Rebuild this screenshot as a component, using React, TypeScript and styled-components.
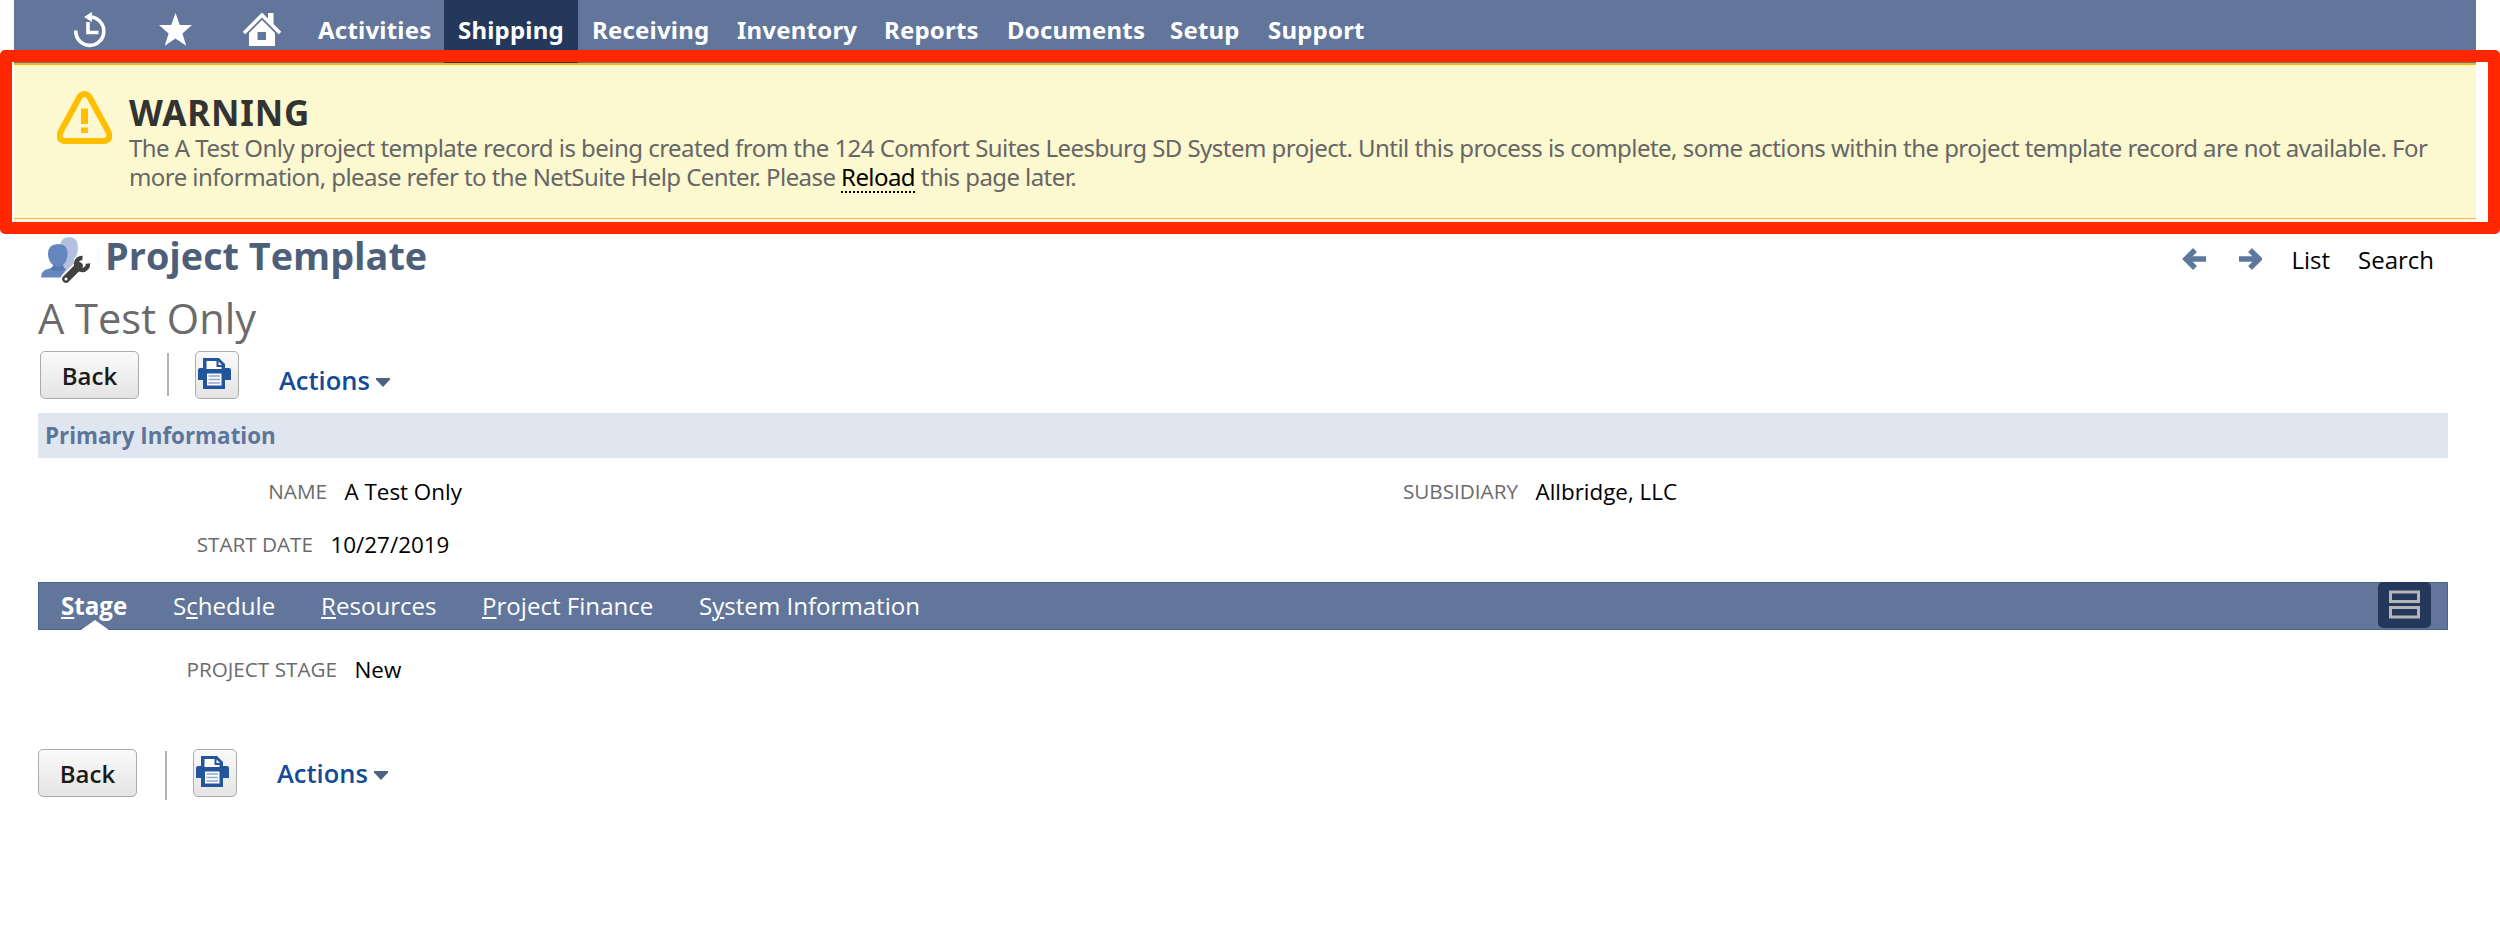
import React from "react";
import styled, { createGlobalStyle } from "styled-components";

const Global = createGlobalStyle`
  * { box-sizing: border-box; }
  html, body { margin: 0; background: #fff; overflow: hidden; }
  body { font-family: "Open Sans", "Noto Sans", sans-serif; color: #000; }
`;

const Page = styled.div`
  position: relative;
  width: 2500px;
  height: 947px;
  overflow: hidden;
`;
const NavBar = styled.nav`
  display: flex;
  height: 63px;
  margin: 0 24px 0 14px;
  padding-left: 58px;
  background: #61769a;
  font-family: "Noto Sans", sans-serif;
`;
const NavIcons = styled.div`
  display: flex;
  width: 232px;
  svg { display: block; width: 232px; height: 63px; }
`;
const NavItem = styled.a<{ $w: number; $active?: boolean }>`
  width: ${(p) => p.$w}px;
  padding-left: 14px;
  font-size: 24px;
  font-weight: 700;
  line-height: 60px;
  letter-spacing: 0.2px;
  white-space: nowrap;
  color: #fff;
  background: ${(p) => (p.$active ? "#24385b" : "transparent")};
`;
const Banner = styled.section`
  display: flex;
  height: 156px;
  margin: 0 24px 0 14px;
  padding: 0 0 0 43px;
  background: #fcf8cf;
  border-top: 2px solid #ffb600;
  border-bottom: 1px solid #fbb829;
  box-shadow: 0 3px 0 #f3f3f3;
  font-family: "Noto Sans", sans-serif;
`;
const WarningIcon = styled.svg`
  flex: none;
  width: 55px;
  height: 53px;
  margin: 26px 17px 0 0;
`;
const BannerText = styled.div`
  padding-top: 28px;
`;
const BannerTitle = styled.h2`
  margin: 0;
  font-size: 35px;
  line-height: 40px;
  letter-spacing: 0.8px;
  color: #333;
`;
const BannerLine = styled.div<{ $ls: number }>`
  height: 29px;
  font-size: 24px;
  line-height: 29px;
  letter-spacing: ${(p) => p.$ls}px;
  white-space: nowrap;
  color: #666;
`;
const Reload = styled.a`
  display: inline-block;
  height: 31px;
  border-bottom: 2px dotted #000;
  color: #000;
`;
const Highlight = styled.div`
  position: absolute;
  left: 0;
  top: 50px;
  width: 2500px;
  height: 184px;
  border: 12px solid #ff2600;
  border-radius: 5px;
`;
const Content = styled.main`
  display: flex;
  flex-direction: column;
  margin: 15px 52px 0 38px;
`;
const TitleRow = styled.header`
  display: flex;
  height: 58px;
`;
const ProjectIcon = styled.svg`
  width: 54px;
  height: 52px;
  margin-right: 13px;
`;
const Title = styled.h1`
  flex: 1;
  margin: 0;
  font-size: 37.8px;
  line-height: 43px;
  color: #4d5f79;
  white-space: nowrap;
`;
const PageLinks = styled.div`
  display: flex;
  height: 52px;
  padding-right: 14px;
  font-size: 24px;
  line-height: 51px;
  svg { width: 26px; height: 24px; margin: 13px 30px 0 0; }
  svg + a { margin-left: -1px; }
  a + a { margin-left: 28px; }
`;
const RecordName = styled.div`
  height: 59px;
  font-size: 41.6px;
  line-height: 52px;
  color: #6b6b6b;
`;
const ButtonRow = styled.div<{ $offset?: number }>`
  display: flex;
  height: 62px;
  padding-left: ${(p) => p.$offset ?? 0}px;
`;
const Button = styled.button<{ $w: number }>`
  display: flex;
  justify-content: center;
  width: ${(p) => p.$w}px;
  height: 48px;
  padding: 0;
  border: 1.5px solid #ababab;
  border-radius: 5px;
  background: linear-gradient(#fafafa, #e4e4e4);
  font-family: "Open Sans", sans-serif;
  font-size: 24px;
  font-weight: 600;
  line-height: 48px;
  color: #1a1a1a;
  svg { width: 33px; height: 31px; margin-top: 6px; margin-right: 5px; }
`;
const Divider = styled.i<{ $h: number }>`
  width: 2px;
  height: ${(p) => p.$h}px;
  margin: 2px 26px 0 28px;
  background: #b3b3b3;
`;
const Actions = styled.div<{ $drop?: number }>`
  display: flex;
  align-items: center;
  gap: 6px;
  height: 48px;
  margin-left: 40px;
  margin-top: ${(p) => p.$drop ?? 0}px;
  font-size: 25.5px;
  font-weight: 600;
  color: #144b97;
  svg { width: 14px; height: 9px; margin-top: 5px; }
`;
const SectionBar = styled.h3`
  height: 45px;
  margin: 0;
  padding-left: 7px;
  background: #dfe6ef;
  font-size: 22.4px;
  line-height: 45px;
  color: #5d7599;
`;
const Fields = styled.div`
  display: grid;
  grid-template-columns: 1201px 1fr;
  grid-auto-rows: 53px;
  height: 124px;
  padding-top: 7px;
`;
const Field = styled.div<{ $label: number }>`
  display: grid;
  grid-template-columns: ${(p) => p.$label}px auto;
  column-gap: 17.5px;
  justify-content: start;
  line-height: 53px;
  white-space: nowrap;
`;
const Label = styled.span`
  text-align: right;
  font-size: 20.7px;
  color: #6b6b6b;
`;
const Value = styled.span`
  font-size: 22.4px;
`;
const TabBar = styled.nav`
  display: flex;
  height: 48px;
  padding-left: 22px;
  background: #61769a;
  border: 1px solid #47658c;
`;
const Tab = styled.a<{ $w: number; $active?: boolean }>`
  position: relative;
  width: ${(p) => p.$w}px;
  font-size: 24.1px;
  font-weight: ${(p) => (p.$active ? 700 : 400)};
  line-height: 45px;
  color: #fff;
  white-space: nowrap;
  u { text-underline-offset: 2px; text-decoration-thickness: 2px; }
`;
const Pointer = styled.svg`
  position: absolute;
  left: 20px;
  bottom: -1px;
  width: 28px;
  height: 10px;
`;
const ViewToggle = styled.button`
  width: 53px;
  height: 46px;
  margin: -1px 16px 0 auto;
  padding: 8px 11px;
  border: 0;
  border-radius: 5px;
  background: #24385b;
  svg { display: block; width: 31px; height: 30px; }
`;
const StagePanel = styled.div`
  height: 119px;
  padding-top: 13px;
`;

const Printer = () => (
  <svg viewBox="0 0 33 31">
    <path d="M5 0h16l6 6v4h4q2 0 2 2v10h-6v9H5v-9H0V12q0-2 2-2h3z" fill="#22559c" />
    <path d="M8.500 3h10v6h5v2h-15z" fill="#fff" />
    <path d="M20.500 3.500v3.500h3.500z" fill="#fff" />
    <path d="M9 15.500h14.500v12H9z" fill="#fff" />
    <path d="M10.500 18h11.500M10.500 21.500h11.500M10.500 25h11.500" stroke="#8ba6cf" strokeWidth="1.300" />
  </svg>
);

const ActionsMenu = ({ drop }: { drop?: number }) => (
  <Actions $drop={drop}>
    Actions
    <svg viewBox="0 0 14 9"><path d="M0 0h14v1.500L7 9 0 1.500z" fill="#4d6180" /></svg>
  </Actions>
);

const navItems: [string, number, boolean?][] = [
  ["Activities", 140], ["Shipping", 134, true], ["Receiving", 145], ["Inventory", 147],
  ["Reports", 123], ["Documents", 163], ["Setup", 98], ["Support", 120],
];

export default function App() {
  return (
    <Page>
      <Global />
      <NavBar>
        <NavIcons>
          <svg viewBox="0 0 232 63" fill="none" stroke="#fff">
            <path d="M3.800 30.500A14 14.200 0 1 0 18 17" strokeWidth="3.600" />
            <path d="M12 17l8-5v10z" fill="#fff" stroke="none" />
            <path d="M16 22v10.500h10.500" strokeWidth="3.600" />
            <path d="M103.500 13l4.300 12H120l-9.600 8.500 3.800 12.200-10.700-7.200-10.700 7.200 3.800-12.200L87 25h12.200z" fill="#fff" stroke="none" />
            <path d="M172 33l18-18 18 18" strokeWidth="3.500" />
            <path d="M196 13h5.500v13l-5.500-5z" fill="#fff" stroke="none" />
            <path d="M177 33l13-13 13 13v13h-26zM185.500 32v8h8.500v-8z" fill="#fff" fillRule="evenodd" stroke="none" />
          </svg>
        </NavIcons>
        {navItems.map(([label, w, active]) => (
          <NavItem key={label} $w={w} $active={active}>{label}</NavItem>
        ))}
      </NavBar>
      <Banner>
        <WarningIcon viewBox="0 0 55 53" fill="none" stroke="#ffbf00">
          <path d="M22.500 6q5-6 10 0l19 35q3 8.500-5 9h-38q-8-.5-5-9z" strokeWidth="6" />
          <path d="M27.500 17.500v15.500M27.500 36.500v5.500" strokeWidth="7" />
        </WarningIcon>
        <BannerText>
          <BannerTitle>WARNING</BannerTitle>
          <BannerLine $ls={-0.535}>
            The A Test Only project template record is being created from the 124 Comfort Suites Leesburg SD System project. Until this process is complete, some actions within the project template record are not available. For
          </BannerLine>
          <BannerLine $ls={-0.575}>
            more information, please refer to the NetSuite Help Center. Please <Reload>Reload</Reload> this page later.
          </BannerLine>
        </BannerText>
      </Banner>
      <Content>
        <TitleRow>
          <ProjectIcon viewBox="0 0 54 52">
            <path d="M31 3q9 0 9 11 0 7-4 11v6l-8 8h-6V14q0-11 9-11z" fill="#b3c1df" />
            <path d="M3 43.500q0-7 7-8.500 5-1 5-4-5-4-5-11 0-10 10-10t9.500 10q0 7-4.500 11 0 3 3 4l-5 8.500z" fill="#6487c0" />
            <path d="M15 31q5 4 10 0 0 3 3 4-8 4-17 0 4-1 4-4z" fill="#5578ae" />
            <path d="M28 45l13-13" stroke="#fff" strokeWidth="11" strokeLinecap="round" />
            <path d="M28 45l13-13" stroke="#414141" strokeWidth="7.500" strokeLinecap="round" />
            <path d="M44.500 24A6 6 0 1 0 50 29.500" fill="none" stroke="#414141" strokeWidth="4.500" />
            <circle cx="28" cy="45" r="1.500" fill="#fff" />
          </ProjectIcon>
          <Title>Project Template</Title>
          <PageLinks>
            <svg viewBox="0 0 26 24" fill="none" stroke="#5d789d" strokeWidth="5.500"><path d="M15 3L6 12l9 9M6 12h20" /></svg>
            <svg viewBox="0 0 26 24" fill="none" stroke="#5d789d" strokeWidth="5.500"><path d="M14 3l9 9-9 9M23 12H3" /></svg>
            <a>List</a>
            <a>Search</a>
          </PageLinks>
        </TitleRow>
        <RecordName>A Test Only</RecordName>
        <ButtonRow $offset={2}>
          <Button $w={99}>Back</Button>
          <Divider $h={43} />
          <Button $w={44}><Printer /></Button>
          <ActionsMenu drop={5} />
        </ButtonRow>
        <SectionBar>Primary Information</SectionBar>
        <Fields>
          <Field $label={289}><Label>NAME</Label><Value>A Test Only</Value></Field>
          <Field $label={279}><Label>SUBSIDIARY</Label><Value>Allbridge, LLC</Value></Field>
          <Field $label={275}><Label>START DATE</Label><Value>10/27/2019</Value></Field>
        </Fields>
        <TabBar>
          <Tab $w={112} $active><u>S</u>tage<Pointer viewBox="0 0 28 10"><path d="M0 10L14 0l14 10z" fill="#fff" /></Pointer></Tab>
          <Tab $w={148}>S<u>c</u>hedule</Tab>
          <Tab $w={161}><u>R</u>esources</Tab>
          <Tab $w={217}><u>P</u>roject Finance</Tab>
          <Tab $w={240}>S<u>y</u>stem Information</Tab>
          <ViewToggle>
            <svg viewBox="0 0 31 30" fill="none" stroke="#b5b5b5" strokeWidth="3"><path d="M1.500 2h28v9.500h-28zM1.500 17.500h28v9.500h-28z" /></svg>
          </ViewToggle>
        </TabBar>
        <StagePanel>
          <Field $label={299}><Label>PROJECT STAGE</Label><Value>New</Value></Field>
        </StagePanel>
        <ButtonRow>
          <Button $w={99}>Back</Button>
          <Divider $h={49} />
          <Button $w={44}><Printer /></Button>
          <ActionsMenu />
        </ButtonRow>
      </Content>
      <Highlight />
    </Page>
  );
}
